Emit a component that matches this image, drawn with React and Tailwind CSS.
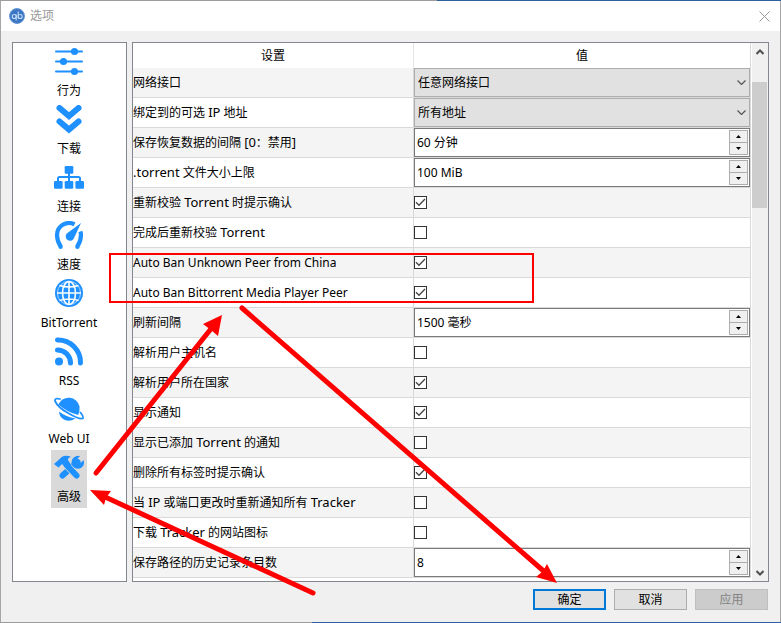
import React from "react";

const sans = "font-['Noto_Sans','Noto_Sans_CJK_SC',sans-serif]";

// Latin words set among Chinese ones are drawn one size up so that both look equally tall.
function Label({ text }) {
  if (/^[\x20-\x7e]+$/.test(text)) return text;
  return text.split(/([\x21-\x7e][\x20-\x7e]*[\x21-\x7e]|[\x21-\x7e])/).map((part, i) =>
    i % 2 ? (
      <span key={i} className="text-[13px]">
        {part}
      </span>
    ) : (
      part
    ),
  );
}

function Icon({ children }) {
  return (
    <svg viewBox="0 0 32 32" className="block size-8 shrink-0" fill="#1e90ff" stroke="none" aria-hidden="true">
      {children}
    </svg>
  );
}

const icons = {
  behavior: (
    <Icon>
      <path d="M3 4.500H29M3 14.500H29M3 24.500H29" stroke="#1e90ff" strokeWidth="2" strokeLinecap="round" />
      <circle cx="21.5" cy="4.5" r="3.6" />
      <circle cx="10.5" cy="14.5" r="3.6" />
      <circle cx="21.5" cy="24.5" r="3.6" />
    </Icon>
  ),
  downloads: (
    <Icon>
      <path d="M6.500 3L16 11L25.500 3M6.500 16.500L16 24.500L25.500 16.500" fill="none" stroke="#1e90ff" strokeWidth="6" strokeLinecap="round" />
    </Icon>
  ),
  connection: (
    <Icon>
      <rect x="11.7" y="3" width="8.6" height="7.7" rx="1.2" />
      <rect x="1" y="18" width="8.6" height="7.7" rx="1.2" />
      <rect x="11.7" y="18" width="8.6" height="7.7" rx="1.2" />
      <rect x="22.4" y="18" width="8.6" height="7.7" rx="1.2" />
      <path d="M16 10V19M5 19V15.500Q5 14 6.500 14H25.500Q27 14 27 15.500V19" fill="none" stroke="#1e90ff" strokeWidth="2" />
    </Icon>
  ),
  speed: (
    <Icon>
      <path d="M7.800 25.600Q4 20 4 14A12 12 0 0 1 21.500 3.400M27.400 10.500Q28 12 28 14Q28 20 24.200 25.600" fill="none" stroke="#1e90ff" strokeWidth="4.2" />
      <circle cx="7.6" cy="25.8" r="2.2" />
      <circle cx="24.4" cy="25.8" r="2.2" />
      <path d="M28 2L20.800 17.500A4.300 4.300 0 1 1 13.800 12.600Z" />
    </Icon>
  ),
  bittorrent: (
    <Icon>
      <circle cx="16" cy="14" r="14" />
      <g fill="none" stroke="#fff" strokeWidth="1.6">
        <ellipse cx="16" cy="14" rx="6.5" ry="11.5" />
        <path d="M16 2.500V25.500M4 14H28M6.500 6.500Q16 9.500 25.500 6.500M6.500 21.500Q16 18.500 25.500 21.500" />
        <circle cx="16" cy="14" r="11.6" strokeWidth="0.6" />
      </g>
    </Icon>
  ),
  rss: (
    <Icon>
      <circle cx="6" cy="24.5" r="4" />
      <path d="M4.500 3A22.500 22.500 0 0 1 27.500 26M4.500 13A13 13 0 0 1 17.500 26" fill="none" stroke="#1e90ff" strokeWidth="5" strokeLinecap="round" />
    </Icon>
  ),
  webui: (
    <Icon>
      <path d="M5.300 9.500A11.200 11.200 0 0 1 26.500 11.500Q27 16 25.200 20Q14.500 17.500 5.300 9.500Z" />
      <path d="M6 16.500Q13 22 22.500 23.500Q14 29 7.500 21.500Q6 19 6 16.500Z" />
      <path d="M7 4Q1.500 2.500 2 6Q5 12.500 15 18Q26 24.500 29.800 23.500Q31 22 27.500 17.500" fill="none" stroke="#1e90ff" strokeWidth="1.8" strokeLinecap="round" />
    </Icon>
  ),
  advanced: (
    <Icon>
      <path d="M24.500 9L9.500 22.500" stroke="#1e90ff" strokeWidth="6" strokeLinecap="round" />
      <path d="M11 9.500L24 22.500" stroke="#d9d9d9" strokeWidth="7.5" />
      <path d="M14 12.500L23.500 22.500" stroke="#1e90ff" strokeWidth="6" strokeLinecap="round" />
      <path d="M1 11L5 7.500L9 3.700Q13 1.700 18 3.700Q14.500 5 15 7L18.500 12.500L14 16.500L9 11L5.500 14.500Z" />
      <path d="M27 3.200L23.500 6.500L24.500 9.500L27.500 10L30.600 7Q32 12.500 28 15Q24 17 20 13.500Q17 8 20.500 4.700Q24 2 27 3.200Z" />
    </Icon>
  ),
};

const pages = [
  ["behavior", "行为"],
  ["downloads", "下载"],
  ["connection", "连接"],
  ["speed", "速度"],
  ["bittorrent", "BitTorrent"],
  ["rss", "RSS"],
  ["webui", "Web UI"],
  ["advanced", "高级"],
];

const settings = [
  { label: "网络接口", type: "select", value: "任意网络接口" },
  { label: "绑定到的可选 IP 地址", type: "select", value: "所有地址" },
  { label: "保存恢复数据的间隔 [0：禁用]", type: "spin", value: "60 分钟" },
  { label: ".torrent 文件大小上限", type: "spin", value: "100 MiB" },
  { label: "重新校验 Torrent 时提示确认", type: "check", value: true },
  { label: "完成后重新校验 Torrent", type: "check", value: false },
  { label: "Auto Ban Unknown Peer from China", type: "check", value: true },
  { label: "Auto Ban Bittorrent Media Player Peer", type: "check", value: true },
  { label: "刷新间隔", type: "spin", value: "1500 毫秒" },
  { label: "解析用户主机名", type: "check", value: false },
  { label: "解析用户所在国家", type: "check", value: true },
  { label: "显示通知", type: "check", value: true },
  { label: "显示已添加 Torrent 的通知", type: "check", value: false },
  { label: "删除所有标签时提示确认", type: "check", value: true },
  { label: "当 IP 或端口更改时重新通知所有 Tracker", type: "check", value: false },
  { label: "下载 Tracker 的网站图标", type: "check", value: false },
  { label: "保存路径的历史记录条目数", type: "spin", value: "8" },
];

function StepButton({ up, label }) {
  return (
    <button type="button" aria-label={label} className="flex flex-1 items-center justify-center bg-[#f0f0f0]">
      <svg viewBox="0 0 5 3" className="h-[3px] w-[5px]" aria-hidden="true">
        <path d={up ? "M0 3L2.500 0L5 3Z" : "M0 0H5L2.500 3Z"} />
      </svg>
    </button>
  );
}

function Control({ id, type, value }) {
  if (type === "select") {
    return (
      <div className="grid h-[29px]">
        <select id={id} className="col-start-1 row-start-1 w-full appearance-none border border-[#adadad] bg-[#e1e1e1] px-[3px]">
          <option>{value}</option>
        </select>
        <svg viewBox="0 0 9 5" className="pointer-events-none col-start-1 row-start-1 mr-1 h-[5px] w-[9px] self-center justify-self-end" fill="none" stroke="#555" aria-hidden="true">
          <path d="M0.500 0.500L4.500 4.500L8.500 0.500" strokeWidth="1.2" />
        </svg>
      </div>
    );
  }
  if (type === "spin") {
    return (
      <div className="flex h-[29px] border border-[#7a7a7a] bg-white p-px">
        <input id={id} type="text" defaultValue={value} className="min-w-0 flex-1 bg-white px-px text-[12px] outline-none" />
        <div className="flex w-[19px] flex-col divide-y divide-[#adadad] border border-[#adadad]">
          <StepButton up label="增加" />
          <StepButton label="减少" />
        </div>
      </div>
    );
  }
  return (
    <div className="grid h-[29px] w-[13px] items-center">
      <input
        id={id}
        type="checkbox"
        defaultChecked={value}
        className="peer col-start-1 row-start-1 size-[13px] appearance-none border border-[#333] bg-white"
      />
      <svg viewBox="0 0 13 13" className="pointer-events-none invisible col-start-1 row-start-1 size-[13px] peer-checked:visible" fill="none" stroke="#444" strokeWidth="1.3" aria-hidden="true">
        <path d="M2 6.200L5 9.200L11 3" />
      </svg>
    </div>
  );
}

function SettingsTable() {
  return (
    <table className="w-full table-fixed border-separate border-spacing-0 border-r border-[#d9d9d9]">
      <thead>
        <tr className="h-[25px]">
          <th className="w-[281px] border-r border-[#e5e5e5] p-0 font-normal">设置</th>
          <th className="p-0 font-normal">值</th>
        </tr>
      </thead>
      <tbody>
        {settings.map((s, i) => (
          <tr key={s.label} className="h-[30px] odd:bg-[#f4f4f4] even:bg-white">
            <td className="border-r border-b border-[#d9d9d9] p-0">
              <label htmlFor={`setting-${i}`} className="block h-[29px] leading-[29px] whitespace-nowrap">
                <Label text={s.label} />
              </label>
            </td>
            <td className="border-b border-[#d9d9d9] p-0">
              <Control id={`setting-${i}`} type={s.type} value={s.value} />
            </td>
          </tr>
        ))}
      </tbody>
    </table>
  );
}

function ScrollArrow({ up }) {
  return (
    <button type="button" aria-label={up ? "向上滚动" : "向下滚动"} className="flex h-[17px] w-full items-center justify-center">
      <svg viewBox="0 0 8 6" className="h-[6px] w-[8px]" fill="none" stroke="#505050" strokeWidth="2" aria-hidden="true">
        <path d={up ? "M0.500 5L4 1.500L7.500 5" : "M0.500 1L4 4.500L7.500 1"} />
      </svg>
    </button>
  );
}

function Annotations() {
  return (
    <svg width="781" height="623" viewBox="0 0 781 623" className="pointer-events-none absolute top-0 left-0" fill="none" stroke="#f00" aria-hidden="true">
      <rect x="110" y="254" width="423" height="48" strokeWidth="2" />
      <g strokeWidth="5" strokeLinecap="round">
        <path d="M96 473L214 325" />
        <path d="M242 308L547 574" />
        <path d="M313 593L103 496" />
      </g>
      <g fill="#f00" stroke="none">
        <path d="M222 315L218 336L211 330L203 324Z" />
        <path d="M557 583L536 577L543 571L547 564Z" />
        <path d="M90 490L111 491L106 498L104 505Z" />
      </g>
    </svg>
  );
}

export default function App() {
  return (
    <div className={`relative flex h-screen flex-col text-[12px] text-black ${sans}`}>
      <div className="h-px shrink-0 bg-linear-to-r from-[#9c9c9c] from-56% to-[#2f5f9f] to-56%" />
      <div className="flex min-h-0 flex-1 flex-col border-x border-[#a6a6a6] bg-[#f0f0f0]">
        <header className="flex h-[30px] shrink-0 items-center bg-white pr-[10px] pl-2">
          <svg viewBox="0 0 16 16" className="size-4" aria-hidden="true">
            <circle cx="8" cy="8" r="7.5" fill="#3b76c4" stroke="#6f9bd4" />
            <g fill="none" stroke="#c5daf3" strokeWidth="1.1">
              <circle cx="5.2" cy="8.5" r="2" />
              <path d="M7.200 6.500V12.500M9.200 3.500V10.500" />
              <circle cx="11.2" cy="8.5" r="2" />
            </g>
          </svg>
          <h1 className="ml-[5px] flex-1 text-[#999]">选项</h1>
          <button type="button" aria-label="关闭">
            <svg viewBox="0 0 11 11" className="size-[11px]" stroke="#999" aria-hidden="true">
              <path d="M0.500 0.500L10.500 10.500M10.500 0.500L0.500 10.500" />
            </svg>
          </button>
        </header>

        <main className="flex min-h-0 flex-1 gap-[5px] px-[11px] pt-[11px]">
          <nav className="flex w-[115px] shrink-0 flex-col items-center border border-[#828790] bg-white pt-px pr-px">
            {pages.map(([key, name]) => (
              <button
                type="button"
                key={key}
                aria-pressed={key === "advanced"}
                className="flex h-[58px] min-w-9 shrink-0 flex-col items-center pt-[3px] aria-pressed:bg-[#d9d9d9]"
              >
                {icons[key]}
                <span className="mt-[3px] leading-[18px]">{name}</span>
              </button>
            ))}
          </nav>
          <section className="flex min-w-0 flex-1 border border-[#828790] bg-white">
            <div className="min-w-0 flex-1 overflow-hidden">
              <SettingsTable />
            </div>
            <div className="ml-px flex w-4 shrink-0 flex-col bg-[#f0f0f0] pr-px">
              <ScrollArrow up />
              <div className="flex-1 pt-[22px]">
                <div className="h-[126px] bg-[#cdcdcd]" />
              </div>
              <ScrollArrow />
            </div>
          </section>
        </main>

        <footer className="flex shrink-0 justify-end gap-2 pt-[7px] pr-3 pb-3">
          <button type="button" className="h-[21px] w-[73px] border-2 border-[#0078d7] bg-[#e1e1e1] leading-[17px]">
            确定
          </button>
          <button type="button" className="h-[21px] w-[73px] border border-[#adadad] bg-[#e1e1e1] leading-[19px]">
            取消
          </button>
          <button type="button" disabled className="h-[21px] w-[73px] border border-[#bfbfbf] bg-[#ccc] leading-[19px] text-[#838383]">
            应用
          </button>
        </footer>
      </div>
      <div className="h-px shrink-0 bg-linear-to-r from-[#9c9c9c] from-40% to-[#2f5f9f] to-40%" />
      <Annotations />
    </div>
  );
}
